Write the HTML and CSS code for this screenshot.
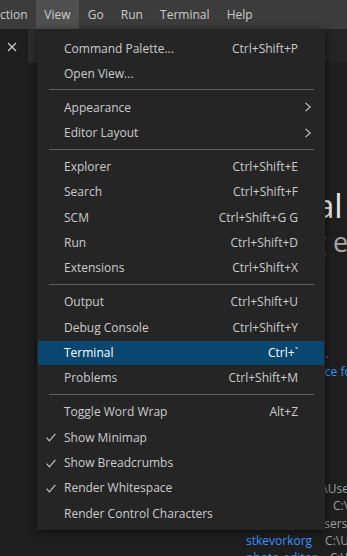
FILE: index.html
```html
<!DOCTYPE html>
<html lang="en">

<head>
    <meta charset="UTF-8">
    <meta name="viewport" content="width=device-width, initial-scale=1.0">
    <title>View menu</title>
    <link rel="stylesheet" href="styles.css">
</head>

<body>
    <div class="window">
        <div class="titlebar">
            <div class="menubar-item first">ction</div>
            <div class="menubar-item open">View</div>
            <div class="menubar-item">Go</div>
            <div class="menubar-item">Run</div>
            <div class="menubar-item">Terminal</div>
            <div class="menubar-item">Help</div>
        </div>

        <div class="tabs">
            <div class="tab active">
                <svg width="10" height="10" viewBox="0 0 10 10">
                    <path d="M1 1L9 9M9 1L1 9" stroke="#cccccc" stroke-width="1.2" fill="none" />
                </svg>
            </div>
            <div class="tab"></div>
        </div>

        <div class="editor">
            <div class="welcome">
                <h1 class="title">Visual Studio Code</h1>
                <p class="subtitle">Editing evolved</p>

                <div class="section start">
                    <h2>Start</h2>
                    <ul class="list">
                        <li><a class="link">New file</a></li>
                        <li><a class="link">Open folder...</a></li>
                        <li><a class="link">Add workspace folder...</a></li>
                    </ul>
                </div>

                <div class="section recent">
                    <h2>Recent</h2>
                    <ul class="list">
                        <li><a class="link">webclient</a><span class="path">C:\Users\stkevorkorg\Repos</span></li>
                        <li><a class="link">vscode-notes</a><span class="path">C:\Users\stkevorkorg</span></li>
                        <li><a class="link">dotfiles</a><span class="path">C:\Users\stkevorkorg</span></li>
                        <li><a class="link">stkevorkorg</a><span class="path">C:\Users\stkevorkorg</span></li>
                        <li><a class="link">photo-editor</a><span class="path">C:\Users\stkevorkorg</span></li>
                    </ul>
                </div>
            </div>
        </div>

        <!-- the open View menu -->
        <div class="menu">
            <div class="item"><span class="check"></span><span class="label">Command Palette...</span><span class="key">Ctrl+Shift+P</span><span class="sub"></span></div>
            <div class="item"><span class="check"></span><span class="label">Open View...</span><span class="key"></span><span class="sub"></span></div>
            <div class="separator"></div>
            <div class="item"><span class="check"></span><span class="label">Appearance</span><span class="key"></span><span class="sub"><svg width="8" height="10" viewBox="0 0 8 10"><path d="M1.5 0.8L6.2 5L1.5 9.2" stroke="#cccccc" stroke-width="1.1" fill="none" /></svg></span></div>
            <div class="item"><span class="check"></span><span class="label">Editor Layout</span><span class="key"></span><span class="sub"><svg width="8" height="10" viewBox="0 0 8 10"><path d="M1.5 0.8L6.2 5L1.5 9.2" stroke="#cccccc" stroke-width="1.1" fill="none" /></svg></span></div>
            <div class="separator"></div>
            <div class="item"><span class="check"></span><span class="label">Explorer</span><span class="key">Ctrl+Shift+E</span><span class="sub"></span></div>
            <div class="item"><span class="check"></span><span class="label">Search</span><span class="key">Ctrl+Shift+F</span><span class="sub"></span></div>
            <div class="item"><span class="check"></span><span class="label">SCM</span><span class="key">Ctrl+Shift+G G</span><span class="sub"></span></div>
            <div class="item"><span class="check"></span><span class="label">Run</span><span class="key">Ctrl+Shift+D</span><span class="sub"></span></div>
            <div class="item"><span class="check"></span><span class="label">Extensions</span><span class="key">Ctrl+Shift+X</span><span class="sub"></span></div>
            <div class="separator"></div>
            <div class="item"><span class="check"></span><span class="label">Output</span><span class="key">Ctrl+Shift+U</span><span class="sub"></span></div>
            <div class="item"><span class="check"></span><span class="label">Debug Console</span><span class="key">Ctrl+Shift+Y</span><span class="sub"></span></div>
            <div class="item selected"><span class="check"></span><span class="label">Terminal</span><span class="key">Ctrl+`</span><span class="sub"></span></div>
            <div class="item"><span class="check"></span><span class="label">Problems</span><span class="key">Ctrl+Shift+M</span><span class="sub"></span></div>
            <div class="separator"></div>
            <div class="item"><span class="check"></span><span class="label">Toggle Word Wrap</span><span class="key">Alt+Z</span><span class="sub"></span></div>
            <div class="item"><span class="check"><svg width="10" height="9" viewBox="0 0 10 9"><path d="M0.6 4.6L3.4 7.9L9.4 0.8" stroke="#c8c8c8" stroke-width="1.1" fill="none" /></svg></span><span class="label">Show Minimap</span><span class="key"></span><span class="sub"></span></div>
            <div class="item"><span class="check"><svg width="10" height="9" viewBox="0 0 10 9"><path d="M0.6 4.6L3.4 7.9L9.4 0.8" stroke="#c8c8c8" stroke-width="1.1" fill="none" /></svg></span><span class="label">Show Breadcrumbs</span><span class="key"></span><span class="sub"></span></div>
            <div class="item"><span class="check"><svg width="10" height="9" viewBox="0 0 10 9"><path d="M0.6 4.6L3.4 7.9L9.4 0.8" stroke="#c8c8c8" stroke-width="1.1" fill="none" /></svg></span><span class="label">Render Whitespace</span><span class="key"></span><span class="sub"></span></div>
            <div class="item"><span class="check"></span><span class="label">Render Control Characters</span><span class="key"></span><span class="sub"></span></div>
        </div>
    </div>
</body>

</html>
```

FILE: styles.css
```css
body {
    margin: 0;
    padding: 0;
    background-color: #1e1e1e;
    font-family: "Open Sans", "Noto Sans", sans-serif;
    font-size: 12px;
    color: #cccccc;
    overflow: hidden;
}

.window {
    position: relative;
    width: 347px;
    height: 556px;
    overflow: hidden;
}

/* title bar / menubar */

.titlebar {
    display: flex;
    height: 29px;
    background-color: #3c3c3c;
}

.menubar-item {
    padding: 0 8.6px;
    line-height: 29px;
    white-space: nowrap;
}

.menubar-item.first {
    padding-left: 0;
    padding-right: 8px;
}

.menubar-item.open {
    background-color: #505050;
}

/* tabs */

.tabs {
    display: flex;
    height: 34px;
    background-color: #252526;
}

.tab {
    width: 120px;
    background-color: #2d2d2d;
}

.tab.active {
    width: 28px;
    background-color: #1e1e1e;
    display: flex;
    align-items: center;
    padding-left: 7px;
    box-sizing: border-box;
}

.tab.active svg {
    display: block;
    margin-top: 1px;
}

/* welcome page behind the menu */

.welcome {
    padding: 123px 0 0 246px;
    white-space: nowrap;
}

.title {
    margin: 0 0 0 6px;
    font-size: 33px;
    line-height: 40px;
    font-weight: normal;
    color: #e6e6e6;
}

.subtitle {
    margin: 0 0 0 -6px;
    font-size: 27px;
    line-height: 32px;
    color: #a6a6a6;
}

.section h2 {
    margin: 0 0 6px;
    font-size: 17px;
    line-height: 22px;
    font-weight: normal;
}

.start {
    margin-top: 42px;
}

.recent {
    margin-top: 72px;
}

.list {
    list-style: none;
    margin: 0;
    padding: 0;
}

.list li {
    line-height: 17.33px;
}

.link {
    color: #3794ff;
}

.start .link {
    margin-left: 6px;
}

.path {
    margin-left: 13px;
    color: #a0a0a0;
}

/* menu */

.menu {
    position: absolute;
    top: 29px;
    left: 37px;
    width: 288px;
    box-sizing: border-box;
    padding: 7px 1px 3.7px;
    background-color: #252526;
    box-shadow: 0 2px 8px rgba(0, 0, 0, 0.6);
}

.item {
    display: flex;
    align-items: center;
    height: 24px;
    margin-bottom: 1.33px;
    white-space: nowrap;
}

.item.selected {
    background-color: #094771;
    color: #ffffff;
}

.check {
    width: 26px;
    flex-shrink: 0;
    display: flex;
    align-items: center;
    padding-left: 8px;
    box-sizing: border-box;
}

.check svg {
    display: block;
    margin-top: 1px;
}

.label {
    flex: 1;
}

.key {
    text-align: right;
}

.sub {
    width: 26px;
    flex-shrink: 0;
    display: flex;
    align-items: center;
    padding-left: 6px;
    box-sizing: border-box;
}

.sub svg {
    display: block;
}

.separator {
    height: 1px;
    margin: 4px 10px 5px 11px;
    background-color: #606060;
}
```
